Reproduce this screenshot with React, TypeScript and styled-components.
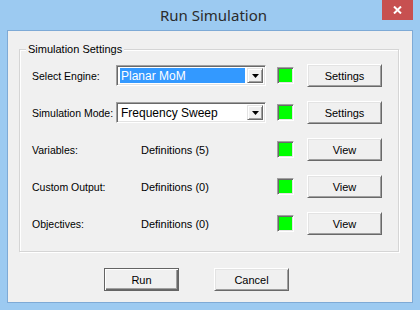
import styled, { createGlobalStyle } from 'styled-components'

const Global = createGlobalStyle`
  html, body {
    margin: 0;
    padding: 0;
    background: #9ccaf1;
  }
  * {
    box-sizing: border-box;
  }
`

const Window = styled.div`
  width: 420px;
  height: 310px;
  background: #9ccaf1;
  display: flex;
  flex-direction: column;
  padding: 0 7px 7px 7px;
  font-family: "Liberation Sans", Arial, sans-serif;
  font-size: 11px;
  color: #000;
`
const TitleBar = styled.div`
  height: 30px;
  display: flex;
  align-items: flex-start;
  position: relative;
`
const Title = styled.div`
  flex: 1;
  text-align: center;
  padding: 5px 0 0 7px;
  font-family: "Noto Sans", "Open Sans", sans-serif;
  font-size: 15px;
  line-height: 20px;
  color: #2b2b2b;
`
const CloseButton = styled.div`
  position: absolute;
  top: 0;
  right: 0;
  width: 31px;
  height: 20px;
  background: #c75050;
  display: flex;
  align-items: center;
  justify-content: center;
`
const Client = styled.div`
  flex: 1;
  background: #f0f0f0;
  border: 1px solid #7eaad6;
  display: flex;
  flex-direction: column;
`
const Group = styled.div`
  position: relative;
  margin: 18px 0 0 11px;
  width: 380px;
  height: 203px;
  border: 1px solid #d5d5d5;
  box-shadow: inset 1px 1px 0 #fff, 1px 1px 0 #fff;
  padding: 14px 15px 0 12px;
`
const Legend = styled.span`
  position: absolute;
  top: -8px;
  left: 6px;
  padding: 0 2px;
  background: #f0f0f0;
  line-height: 14px;
`
const Rows = styled.div`
  display: grid;
  grid-template-columns: 84px 161px 30px 75px;
  grid-auto-rows: 23px;
  row-gap: 14px;
  align-items: center;
`
const Label = styled.span`
  white-space: nowrap;
  font-size: 10.5px;
`
const Info = styled.span`
  padding-left: 25px;
  white-space: nowrap;
`
const Select = styled.div`
  width: 150px;
  height: 21px;
  background: #fff;
  border: 1px solid;
  border-color: #a0a0a0 #fff #fff #a0a0a0;
  box-shadow: inset 1px 1px 0 #696969, inset -1px -1px 0 #e3e3e3;
  padding: 2px 2px 2px 3px;
  display: flex;
  align-items: stretch;
  gap: 2px;
`
const SelectValue = styled.div<{ $active?: boolean }>`
  flex: 1;
  display: flex;
  align-items: center;
  padding-left: 1px;
  background: ${(p) => (p.$active ? '#3399ff' : '#fff')};
  color: ${(p) => (p.$active ? '#fff' : '#000')};
  font-size: 12px;
`
const DropButton = styled.div`
  width: 16px;
  background: #f0f0f0;
  border: 1px solid;
  border-color: #e3e3e3 #696969 #696969 #e3e3e3;
  box-shadow: inset 1px 1px 0 #fff, inset -1px -1px 0 #a0a0a0;
  display: flex;
  align-items: center;
  justify-content: center;
`
const Indicator = styled.div`
  width: 17px;
  height: 17px;
  background: #00ff00;
  border: 1px solid;
  border-color: #a0a0a0 #fff #fff #a0a0a0;
  box-shadow: inset 1px 1px 0 #696969, inset -1px -1px 0 #e3e3e3;
`
const Button = styled.div<{ $default?: boolean }>`
  width: 75px;
  height: 23px;
  background: #f0f0f0;
  display: flex;
  align-items: center;
  justify-content: center;
  border: 1px solid;
  border-color: ${(p) => (p.$default ? '#646464' : '#fff #696969 #696969 #fff')};
  box-shadow: ${(p) =>
    p.$default
      ? 'inset 1px 1px 0 #fff, inset -1px -1px 0 #696969, inset -2px -2px 0 #a0a0a0'
      : 'inset 1px 1px 0 #e3e3e3, inset -1px -1px 0 #a0a0a0'};
`
const Footer = styled.div`
  display: flex;
  gap: 35px;
  padding-left: 96px;
  margin-top: 16px;
`

const Arrow = () => (
  <svg width="7" height="4" viewBox="0 0 7 4">
    <path d="M0 0H7L3.5 4Z" fill="#000" />
  </svg>
)

const Combo = ({ value, active }: { value: string; active?: boolean }) => (
  <Select>
    <SelectValue $active={active}>{value}</SelectValue>
    <DropButton>
      <Arrow />
    </DropButton>
  </Select>
)

const App = () => {
  return (
    <>
      <Global />
      <Window>
        <TitleBar>
          <Title>Run Simulation</Title>
          <CloseButton>
            <svg width="9" height="8" viewBox="0 0 9 8">
              <path d="M1 0.5L8 7.5M8 0.5L1 7.5" stroke="#fff" strokeWidth="2" />
            </svg>
          </CloseButton>
        </TitleBar>
        <Client>
          <Group>
            <Legend>Simulation Settings</Legend>
            <Rows>
              <Label>Select Engine:</Label>
              <Combo value="Planar MoM" active />
              <Indicator />
              <Button>Settings</Button>

              <Label>Simulation Mode:</Label>
              <Combo value="Frequency Sweep" />
              <Indicator />
              <Button>Settings</Button>

              <Label>Variables:</Label>
              <Info>Definitions (5)</Info>
              <Indicator />
              <Button>View</Button>

              <Label>Custom Output:</Label>
              <Info>Definitions (0)</Info>
              <Indicator />
              <Button>View</Button>

              <Label>Objectives:</Label>
              <Info>Definitions (0)</Info>
              <Indicator />
              <Button>View</Button>
            </Rows>
          </Group>
          <Footer>
            <Button $default>Run</Button>
            <Button>Cancel</Button>
          </Footer>
        </Client>
      </Window>
    </>
  )
}

export default App
